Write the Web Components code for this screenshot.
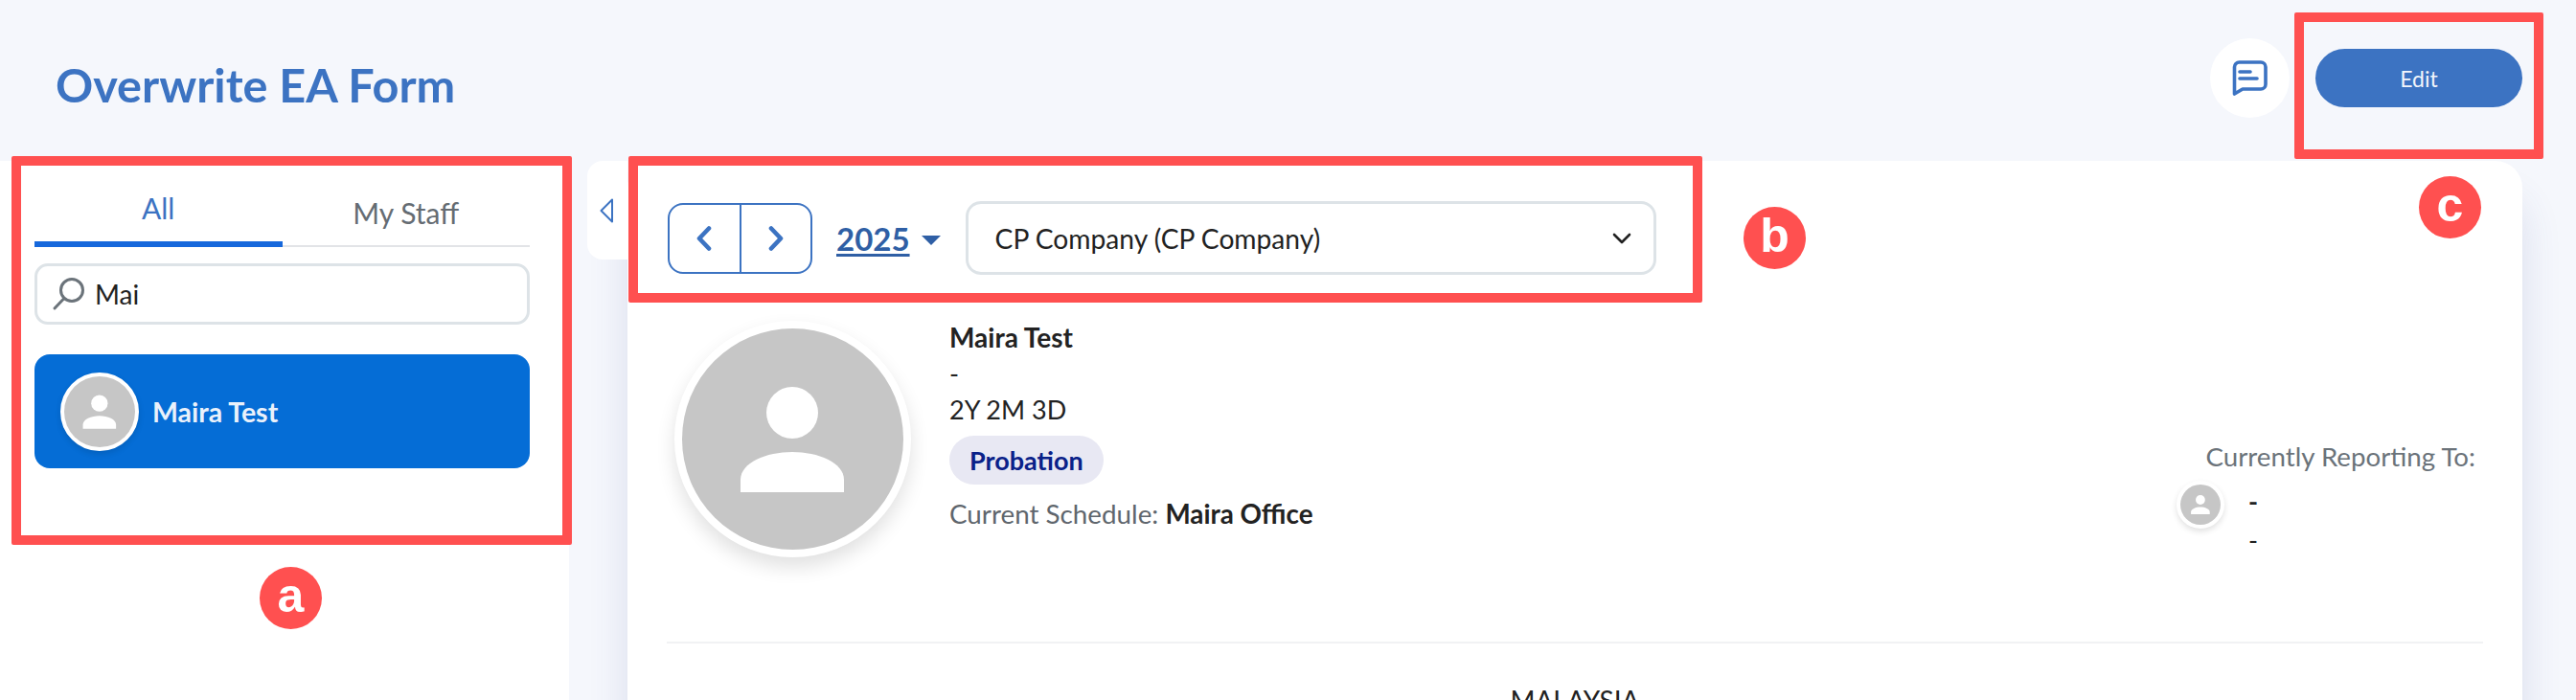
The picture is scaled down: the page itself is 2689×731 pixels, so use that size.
<!DOCTYPE html>
<html lang="en">
<head>
<meta charset="utf-8">
<title>Overwrite EA Form</title>
<style>
    html, body { margin: 0; height: 731px; overflow: hidden; background: #f5f7fc; }
    body { font-family: Lato, "Liberation Sans", sans-serif; color: #222; }
</style>
</head>
<body>
<ea-page>
    <ea-header title-text="Overwrite EA Form"></ea-header>
    <staff-sidebar>
        <staff-tabs></staff-tabs>
        <search-box value="Mai"></search-box>
        <staff-item name="Maira Test"></staff-item>
    </staff-sidebar>
    <collapse-tab></collapse-tab>
    <ea-card>
        <year-toolbar year="2025" company="CP Company (CP Company)"></year-toolbar>
        <profile-summary></profile-summary>
        <div style="height:2px;background:#f1f2f4;margin:0 41px"></div>
        <div style="text-align:center;font-size:28px;line-height:40px;margin-top:39px;color:#222">MALAYSIA</div>
    </ea-card>
    <mark-box style="left:12px;top:163px;width:585px;height:406px"></mark-box>
    <mark-box style="left:656px;top:163px;width:1121px;height:153px"></mark-box>
    <mark-box style="left:2395px;top:13px;width:260px;height:153px"></mark-box>
    <mark-label style="left:271px;top:592px">a</mark-label>
    <mark-label style="left:1820px;top:216px">b</mark-label>
    <mark-label style="left:2525px;top:184px">c</mark-label>
</ea-page>

<script>
function tpl(html) {
    const t = document.createElement('template');
    t.innerHTML = html;
    return t;
}

const personIcon = `
<svg viewBox="0 0 231 231" width="100%" height="100%" style="display:block">
    <circle cx="115.5" cy="115.5" r="115.5" fill="#c6c6c6"/>
    <circle cx="115" cy="88" r="27" fill="#fff"/>
    <path d="M61 171V158C61 140 88 129 115 129S169 140 169 158V171Z" fill="#fff"/>
</svg>`;

const pageTpl = tpl(`
<style>
    :host { display: grid; position: relative; width: 2689px; height: 731px; overflow: hidden;
        grid-template-columns: 594px 61px 1fr; grid-template-rows: 168px 1fr; }
    ::slotted(ea-header) { grid-column: 1 / 4; }
</style>
<slot></slot>`);

const headerTpl = tpl(`
<style>
    :host { display: flex; align-items: flex-start; padding: 0 56px 0 58px; }
    h1 { flex: 1; margin: 64px 0 0; font-size: 48.6px; line-height: 48px; font-weight: 700; color: #3c73c2; }
    .chat { width: 83px; height: 83px; margin-top: 40px; border-radius: 50%; background: #fff;
        display: flex; align-items: center; justify-content: center; }
    button { width: 216px; height: 61px; margin: 51px 0 0 27px; border: 0; border-radius: 31px;
        background: #3c73c2; color: #f2f5fb; font: 400 23px Lato, sans-serif; }
</style>
<h1></h1>
<div class="chat">
    <svg width="37" height="38" viewBox="0 0 37 38" fill="none" stroke="#3c73c2" stroke-width="3.6" stroke-linecap="round" stroke-linejoin="round">
        <path d="M2.5 35V7a5 5 0 0 1 5-5H30a5 5 0 0 1 5 5v18a5 5 0 0 1-5 5H11Z"/>
        <path d="M8 12H19M8 19H26"/>
    </svg>
</div>
<button>Edit</button>`);

class EaPage extends HTMLElement {
    constructor() {
        super();
        this.attachShadow({ mode: 'open' }).appendChild(pageTpl.content.cloneNode(true));
    }
}

class EaHeader extends HTMLElement {
    constructor() {
        super();
        this.attachShadow({ mode: 'open' }).appendChild(headerTpl.content.cloneNode(true));
        this.shadowRoot.querySelector('h1').textContent = this.getAttribute('title-text');
    }
}

const sidebarTpl = tpl(`
<style>
    :host { display: flex; flex-direction: column; background: #fff; padding: 0 41px 0 36px; }
</style>
<slot></slot>`);

class StaffSidebar extends HTMLElement {
    constructor() {
        super();
        this.attachShadow({ mode: 'open' }).appendChild(sidebarTpl.content.cloneNode(true));
    }
}

const tabsTpl = tpl(`
<style>
    :host { display: flex; height: 90px; box-sizing: border-box; border-bottom: 2px solid #e2e4e7; font-size: 30px; }
    div { flex: 1; text-align: center; box-sizing: border-box; height: 90px; }
    .on { color: #3c73c2; border-bottom: 6px solid #1668dc; padding-top: 30px; line-height: 38px; }
    .off { color: #656c73; padding-top: 35px; line-height: 38px; }
</style>
<div class="on">All</div>
<div class="off">My Staff</div>`);

class StaffTabs extends HTMLElement {
    constructor() {
        super();
        this.attachShadow({ mode: 'open' }).appendChild(tabsTpl.content.cloneNode(true));
    }
}

const searchTpl = tpl(`
<style>
    :host { display: flex; align-items: center; gap: 9px; height: 64px; margin-top: 17px; padding-left: 15px;
        box-sizing: border-box; border: 3px solid #dde3e7; border-radius: 14px; background: #fff; }
    span { font-size: 28px; color: #222; }
</style>
<svg width="36" height="36" viewBox="0 0 36 36" fill="none" stroke="#6b737a" stroke-width="3" stroke-linecap="round">
    <circle cx="21" cy="14" r="11.5"/>
    <path d="M13 22.5L3 33"/>
</svg>
<span></span>`);

class SearchBox extends HTMLElement {
    constructor() {
        super();
        this.attachShadow({ mode: 'open' }).appendChild(searchTpl.content.cloneNode(true));
        this.shadowRoot.querySelector('span').textContent = this.getAttribute('value');
    }
}

const avatarTpl = tpl(`
<style>
    :host { display: block; flex: none; box-sizing: border-box; width: var(--size); height: var(--size);
        border: var(--ring) solid #fff; border-radius: 50%; background: #fff;
        box-shadow: 0 var(--drop) calc(var(--drop) * 2) rgba(0,0,0,.12); }
</style>
${personIcon}`);

class UserAvatar extends HTMLElement {
    constructor() {
        super();
        this.attachShadow({ mode: 'open' }).appendChild(avatarTpl.content.cloneNode(true));
    }
}

const itemTpl = tpl(`
<style>
    :host { display: flex; align-items: center; gap: 14px; height: 119px; margin-top: 31px; padding-left: 27px;
        box-sizing: border-box; border-radius: 16px; background: #056dd6; }
    span { color: #eaf1fb; font-size: 28.5px; font-weight: 700; }
    user-avatar { --size: 82px; --ring: 4px; --drop: 3px; }
</style>
<user-avatar></user-avatar>
<span></span>`);

class StaffItem extends HTMLElement {
    constructor() {
        super();
        this.attachShadow({ mode: 'open' }).appendChild(itemTpl.content.cloneNode(true));
        this.shadowRoot.querySelector('span').textContent = this.getAttribute('name');
    }
}

const collapseTpl = tpl(`
<style>
    :host { display: flex; align-items: center; position: relative; z-index: 1; box-sizing: border-box;
        height: 103px; margin-left: 19px; padding-left: 13px; background: #fff; border-radius: 16px 0 0 16px; }
</style>
<svg width="14" height="26" viewBox="0 0 14 26" fill="none" stroke="#3c73c2" stroke-width="2" stroke-linejoin="round">
    <path d="M13 1.5V24.5L1.5 13Z"/>
</svg>`);

class CollapseTab extends HTMLElement {
    constructor() {
        super();
        this.attachShadow({ mode: 'open' }).appendChild(collapseTpl.content.cloneNode(true));
    }
}

const cardTpl = tpl(`
<style>
    :host { display: block; margin-right: 56px; height: 640px; background: #fff; border-radius: 28px 28px 0 0;
        box-shadow: 0 40px 42px rgba(60,70,150,.14); }
</style>
<slot></slot>`);

class EaCard extends HTMLElement {
    constructor() {
        super();
        this.attachShadow({ mode: 'open' }).appendChild(cardTpl.content.cloneNode(true));
    }
}

const toolbarTpl = tpl(`
<style>
    :host { display: flex; align-items: center; padding: 42px 0 0 42px; }
    .nav { display: flex; box-sizing: border-box; width: 151px; height: 74px; border: 2px solid #3c73c2; border-radius: 16px; }
    .nav div { flex: 1; display: flex; align-items: center; justify-content: center; }
    .nav div + div { border-left: 2px solid #3c73c2; }
    .year { margin-left: 25px; font-size: 33px; font-weight: 700; color: #2f5fa5; text-decoration: underline; text-underline-offset: 3px; }
    .caret { width: 0; height: 0; margin: 4px 26px 0 12px; border: 10px solid transparent; border-top: 10px solid #2f5fa5; border-bottom: 0; }
    .select { display: flex; align-items: center; justify-content: space-between; box-sizing: border-box; width: 721px; height: 77px;
        padding: 0 23px 0 28px; border: 3px solid #dde3e7; border-radius: 16px; font-size: 28.2px; color: #222; }
</style>
<div class="nav">
    <div><svg width="20" height="30" viewBox="0 0 20 30" fill="none" stroke="#3c73c2" stroke-width="4.6" stroke-linecap="round" stroke-linejoin="round"><path d="M15 4.5L5 15L15 25.5"/></svg></div>
    <div><svg width="20" height="30" viewBox="0 0 20 30" fill="none" stroke="#3c73c2" stroke-width="4.6" stroke-linecap="round" stroke-linejoin="round"><path d="M5 4.5L15 15L5 25.5"/></svg></div>
</div>
<span class="year"></span>
<span class="caret"></span>
<div class="select">
    <span class="company"></span>
    <svg width="20" height="12" viewBox="0 0 20 12" fill="none" stroke="#222" stroke-width="2.6" stroke-linecap="round" stroke-linejoin="round"><path d="M2 2L10 10L18 2"/></svg>
</div>`);

class YearToolbar extends HTMLElement {
    constructor() {
        super();
        this.attachShadow({ mode: 'open' }).appendChild(toolbarTpl.content.cloneNode(true));
        this.shadowRoot.querySelector('.year').textContent = this.getAttribute('year');
        this.shadowRoot.querySelector('.company').textContent = this.getAttribute('company');
    }
}

const summaryTpl = tpl(`
<style>
    :host { display: flex; box-sizing: border-box; height: 335px; margin-top: 48px; padding: 0 49px 0 49px; font-size: 27px; }
    .main { --size: 247px; --ring: 8px; --drop: 10px; }
    .info { flex: 1; margin: -2px 0 0 40px; line-height: 38px; }
    .name { font-size: 28px; font-weight: 700; }
    .badge { display: inline-block; height: 51px; margin-top: 8px; padding: 0 21px; line-height: 51px; border-radius: 26px;
        background: #e8e8f3; color: #0a2189; font-weight: 700; }
    .sched { margin-top: 12px; font-size: 27.8px; color: #5f666d; }
    .sched b { color: #222; }
    .report { width: 312px; margin-top: 123px; }
    .report > div:first-child { text-align: right; line-height: 38px; color: #6b737a; font-size: 27.7px; }
    .row { display: flex; margin-top: 6px; }
    .row user-avatar { --size: 50px; --ring: 4px; --drop: 3px; }
    .row div { margin: 2px 0 0 25px; line-height: 40px; }
</style>
<user-avatar class="main"></user-avatar>
<div class="info">
    <div class="name">Maira Test</div>
    <div>-</div>
    <div>2Y 2M 3D</div>
    <div class="badge">Probation</div>
    <div class="sched">Current Schedule: <b>Maira Office</b></div>
</div>
<div class="report">
    <div>Currently Reporting To:</div>
    <div class="row">
        <user-avatar></user-avatar>
        <div><b>-</b><br>-</div>
    </div>
</div>`);

class ProfileSummary extends HTMLElement {
    constructor() {
        super();
        this.attachShadow({ mode: 'open' }).appendChild(summaryTpl.content.cloneNode(true));
    }
}

const markBoxTpl = tpl(`
<style>
    :host { display: block; position: absolute; box-sizing: border-box; border: 10px solid #ff5050; border-radius: 2px; }
</style>`);

class MarkBox extends HTMLElement {
    constructor() {
        super();
        this.attachShadow({ mode: 'open' }).appendChild(markBoxTpl.content.cloneNode(true));
    }
}

const markLabelTpl = tpl(`
<style>
    :host { display: flex; position: absolute; align-items: center; justify-content: center; width: 65px; height: 65px;
        border-radius: 50%; background: #ff5050; color: #fff; font: 700 50px/1 "Liberation Sans", sans-serif; }
    span { margin-top: -5px; }
</style>
<span><slot></slot></span>`);

class MarkLabel extends HTMLElement {
    constructor() {
        super();
        this.attachShadow({ mode: 'open' }).appendChild(markLabelTpl.content.cloneNode(true));
    }
}

customElements.define('user-avatar', UserAvatar);
customElements.define('ea-page', EaPage);
customElements.define('ea-header', EaHeader);
customElements.define('staff-sidebar', StaffSidebar);
customElements.define('staff-tabs', StaffTabs);
customElements.define('search-box', SearchBox);
customElements.define('staff-item', StaffItem);
customElements.define('collapse-tab', CollapseTab);
customElements.define('ea-card', EaCard);
customElements.define('year-toolbar', YearToolbar);
customElements.define('profile-summary', ProfileSummary);
customElements.define('mark-box', MarkBox);
customElements.define('mark-label', MarkLabel);
</script>
</body>
</html>
